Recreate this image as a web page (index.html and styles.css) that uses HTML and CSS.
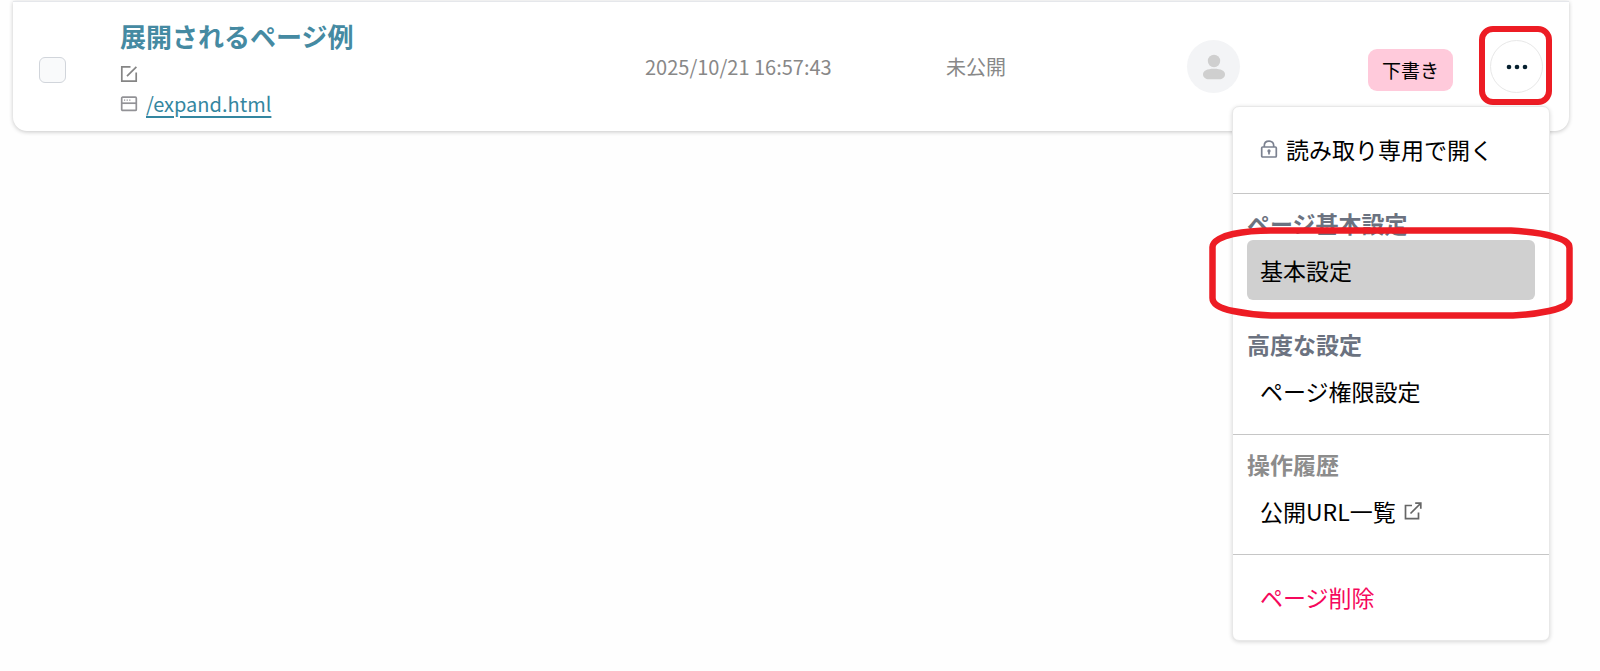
FILE: index.html
```html
<!DOCTYPE html>
<html lang="ja">
<head>
<meta charset="utf-8">
<meta name="viewport" content="width=device-width, initial-scale=1">
<title>ページ一覧</title>
<link rel="stylesheet" href="styles.css">
</head>
<body>
<main class="page-list">
  <article class="row">
    <div class="cell cell-low"><input class="check" type="checkbox" aria-label="展開されるページ例を選択"></div>
    <div class="summary">
      <h2 class="title">展開されるページ例</h2>
      <div class="meta">
        <svg class="icon" viewBox="0 0 18 18" fill="none" stroke="#858585" stroke-width="1.7" aria-hidden="true"><path d="M10.5 1.8H1.8V16.2H16.2V7.5M16.4 1.8L7 11.2"/></svg>
      </div>
      <div class="meta">
        <svg class="icon" viewBox="0 0 18 18" fill="none" stroke="#929296" stroke-width="1.7" aria-hidden="true"><rect x="1.7" y="2.2" width="14.6" height="13.2" rx="1"/><path d="M1.7 8.2H16.3"/><path d="M4 5.2h1.2M6.6 5.2h1.2M9.2 5.2h1.2" stroke-width="1.2"/></svg>
        <a class="path" href="/expand.html">/expand.html</a>
      </div>
    </div>
    <time class="cell muted" datetime="2025-10-21T16:57:43">2025/10/21 16:57:43</time>
    <span class="cell muted">未公開</span>
    <div class="cell">
      <span class="avatar"><svg class="person" viewBox="0 0 24 26" fill="#cfcfcf" aria-hidden="true"><circle cx="12" cy="7" r="6.2"/><path d="M1 20.2C1 16.8 5 14.7 12 14.7s11 2.1 11 5.5c0 3.4-3 5-5.5 5h-11C4 25.2 1 23.6 1 20.2z"/></svg></span>
    </div>
    <div class="cell cell-low"><span class="badge">下書き</span></div>
    <div class="actions">
      <button class="more" type="button" aria-label="メニュー" aria-expanded="true">
        <svg class="dots" viewBox="0 0 22 6" fill="#06202f" aria-hidden="true"><circle cx="3" cy="3" r="2.3"/><circle cx="11" cy="3" r="2.3"/><circle cx="19" cy="3" r="2.3"/></svg>
      </button>
      <span class="mark-button" aria-hidden="true"></span>
      <nav class="menu" aria-label="ページ操作">
        <section class="group group-first">
          <button class="item" type="button">
            <svg class="icon" viewBox="0 0 18 18" fill="none" stroke="#7b8190" stroke-width="1.7" aria-hidden="true"><rect x="1.7" y="7" width="14.6" height="10" rx="1"/><path d="M4.3 7V5.8C4.3 3 6.3 1.2 9 1.2s4.7 1.8 4.7 4.6V7M9 11.5v3"/><circle cx="9" cy="11" r=".8"/></svg>
            読み取り専用で開く
          </button>
        </section>
        <section class="group">
          <h3 class="heading">ページ基本設定</h3>
          <button class="item item-active" type="button">基本設定
            <svg class="mark-item" viewBox="0 0 364 92" preserveAspectRatio="none" fill="none" stroke="#ed1c24" stroke-width="6.5" stroke-linejoin="round" aria-hidden="true"><path d="M3.5 20C3.5 14 14 9 24 7C36 4.5 48 3.5 62 3.5H302C318 4.5 333 6 344 9.5C354 12.5 360.5 15 360.5 21V72C360.5 78 350 82 340 84C328 86.5 318 88 304 88.5H62C47 88 36 86.5 24 84C14 82 3.5 78 3.5 71Z"/></svg>
          </button>
          <h3 class="heading heading-next">高度な設定</h3>
          <button class="item" type="button">ページ権限設定</button>
        </section>
        <section class="group">
          <h3 class="heading heading-gray">操作履歴</h3>
          <a class="item" href="#urls">公開URL一覧
            <svg class="icon" viewBox="0 0 18 18" fill="none" stroke="#666" stroke-width="1.7" aria-hidden="true"><path d="M8 3.5H1.5V16.7H14.5V10.5M6.5 11.5L16.5 1.5M11.2 1.2H16.8V6.8"/></svg>
          </a>
        </section>
        <section class="group">
          <button class="item item-danger" type="button">ページ削除</button>
        </section>
      </nav>
    </div>
  </article>
</main>
</body>
</html>
```

FILE: styles.css
```css
* {
  box-sizing: border-box;
}

body {
  margin: 0;
  min-height: 100vh;
  background: #fefefe;
  color: #000;
  font-family: "Noto Sans CJK JP", "Noto Sans", sans-serif;
  font-size: 20px;
}

h2,
h3 {
  margin: 0;
}

.page-list {
  padding: 1px 31px 0 13px;
}

.row {
  display: grid;
  grid-template-columns: 81px 525fr 301fr 241fr 181fr 122fr 53px;
  align-items: center;
  min-height: 130px;
  padding: 0 26px;
  background: #fff;
  border-top: 1px solid #e5e7eb;
  border-radius: 0 0 14px 14px;
  box-shadow: 0 1px 4px rgba(0, 0, 0, 0.22);
}

.cell {
  display: flex;
  align-items: center;
}

.cell-low {
  padding-top: 6px;
}

.check {
  appearance: none;
  width: 27px;
  height: 26px;
  margin: 0;
  background: #f9fafb;
  border: 1px solid #d1d5db;
  border-radius: 6px;
}

.summary {
  padding-top: 2px;
}

.title {
  margin-bottom: 4px;
  color: #458aa2;
  font-size: 26px;
  line-height: 38px;
}

.meta {
  display: flex;
  align-items: center;
  gap: 8px;
  height: 30px;
}

.icon {
  flex: none;
  width: 18px;
  height: 18px;
}

.path {
  color: #3486a0;
  line-height: 30px;
  text-underline-offset: 4px;
}

.muted {
  color: #888;
}

.avatar {
  display: flex;
  align-items: center;
  justify-content: center;
  width: 53px;
  height: 53px;
  background: #f3f4f6;
  border-radius: 50%;
}

.person {
  width: 24px;
  height: 26px;
}

.badge {
  padding: 6px 14px;
  background: #ffcadb;
  border-radius: 9px;
  font-size: 19px;
  line-height: 30px;
}

.actions {
  position: relative;
}

.more {
  display: flex;
  align-items: center;
  justify-content: center;
  width: 53px;
  height: 53px;
  padding: 0;
  background: #fff;
  border: 1px solid #e8e8e8;
  border-radius: 50%;
}

.dots {
  width: 22px;
  height: 6px;
}

.mark-button {
  position: absolute;
  inset: -14px -9px -12px -11px;
  border: 6px solid #ed1c24;
  border-radius: 14px;
  pointer-events: none;
}

.menu {
  position: absolute;
  top: 66px;
  right: -7px;
  width: 318px;
  background: #fff;
  border: 1px solid #e8e8e8;
  border-radius: 7px;
  box-shadow: 0 1px 4px rgba(0, 0, 0, 0.16);
}

.group {
  padding: 12px 14px 13px;
}

.group-first {
  padding-bottom: 14px;
}

.group + .group {
  border-top: 1px solid #c6c6c6;
}

.heading {
  color: #6b7280;
  font-size: 23px;
  line-height: 34px;
}

.heading-next {
  margin-top: 27px;
}

.heading-gray {
  color: #8c8c8c;
}

.item {
  position: relative;
  display: flex;
  align-items: center;
  gap: 8px;
  width: 100%;
  height: 60px;
  padding: 0 13px;
  background: none;
  border: 0;
  border-radius: 6px;
  color: #000;
  font-family: inherit;
  font-size: 23px;
  text-align: left;
  text-decoration: none;
}

.item-active {
  background: #d0d0d0;
}

.item-danger {
  color: #f5085c;
}

.mark-item {
  position: absolute;
  top: -13px;
  left: -38px;
  width: calc(100% + 76px);
  height: 92px;
  pointer-events: none;
}
```
